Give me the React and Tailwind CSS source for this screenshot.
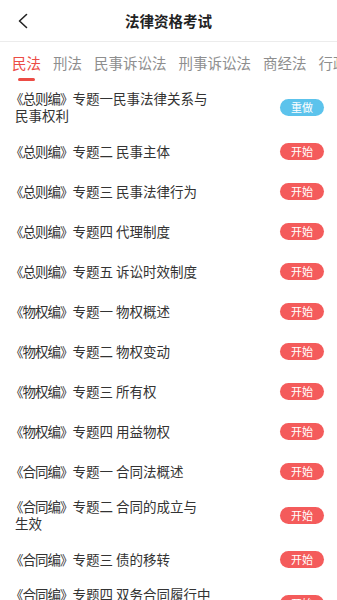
import { useState } from 'react';

const tabs = ['民法', '刑法', '民事诉讼法', '刑事诉讼法', '商经法', '行政法'];

const topics = [
  { book: '《总则编》', lines: ['专题一民事法律关系与', '民事权利'], done: true },
  { book: '《总则编》', lines: ['专题二 民事主体'] },
  { book: '《总则编》', lines: ['专题三 民事法律行为'] },
  { book: '《总则编》', lines: ['专题四 代理制度'] },
  { book: '《总则编》', lines: ['专题五 诉讼时效制度'] },
  { book: '《物权编》', lines: ['专题一 物权概述'] },
  { book: '《物权编》', lines: ['专题二 物权变动'] },
  { book: '《物权编》', lines: ['专题三 所有权'] },
  { book: '《物权编》', lines: ['专题四 用益物权'] },
  { book: '《合同编》', lines: ['专题一 合同法概述'] },
  { book: '《合同编》', lines: ['专题二 合同的成立与', '生效'] },
  { book: '《合同编》', lines: ['专题三 债的移转'] },
  { book: '《合同编》', lines: ['专题四 双务合同履行中', '的抗辩权'] },
];

function App() {
  const [active, setActive] = useState(0);

  return (
    <div
      className="h-screen overflow-hidden bg-white"
      style={{ fontFamily: '"Noto Sans CJK SC", "Noto Sans", sans-serif' }}
    >
      {/* Header */}
      <header className="grid h-[42px] grid-cols-[48px_1fr_48px] items-center border-b border-[#ececec]">
        <button className="flex h-full items-center pl-[17px]">
          <svg width="11" height="16" viewBox="0 0 11 16" fill="none">
            <path d="M9.5 1.5 L2.5 8 L9.5 14.5" stroke="#222" strokeWidth="1.6" strokeLinecap="round" strokeLinejoin="round" />
          </svg>
        </button>
        <h1 className="text-center text-[14.5px] font-bold text-[#222]">法律资格考试</h1>
        <div />
      </header>

      {/* Tabs */}
      <nav className="flex h-[41px] gap-3 overflow-hidden whitespace-nowrap px-3 pt-[11px]">
        {tabs.map((tab, i) => (
          <button key={tab} onClick={() => setActive(i)} className="flex shrink-0 flex-col items-center">
            <span
              className={
                i === active
                  ? 'text-[14.5px] leading-[20px] text-[#ec4c45]'
                  : 'text-[14.5px] leading-[20px] text-[#8e8e8e]'
              }
            >
              {tab}
            </span>
            {i === active && <span className="mt-[5px] h-[3px] w-[17px] rounded-full bg-[#ec4c45]" />}
          </button>
        ))}
      </nav>

      {/* Topic list */}
      <ul>
        {topics.map((t, i) => (
          <li key={i} className="flex min-h-[40px] items-center justify-between py-[7px] pl-[15px] pr-3">
            <div className="w-[207px] text-[13.5px] leading-[17px] text-[#333]">
              <div className="whitespace-nowrap">
                <span className="-ml-[5px] tracking-[-1px]">{t.book}</span>
                {t.lines[0]}
              </div>
              {t.lines[1] && <div className="whitespace-nowrap">{t.lines[1]}</div>}
            </div>
            <button
              className={
                t.done
                  ? 'mr-[1px] flex h-[17px] w-[44px] items-center justify-center rounded-full bg-[#5cc3ec] text-[11px] text-white'
                  : 'mr-[1px] flex h-[17px] w-[44px] items-center justify-center rounded-full bg-[#f45b5b] text-[11px] text-white'
              }
            >
              {t.done ? '重做' : '开始'}
            </button>
          </li>
        ))}
      </ul>
    </div>
  );
}

export default App;
